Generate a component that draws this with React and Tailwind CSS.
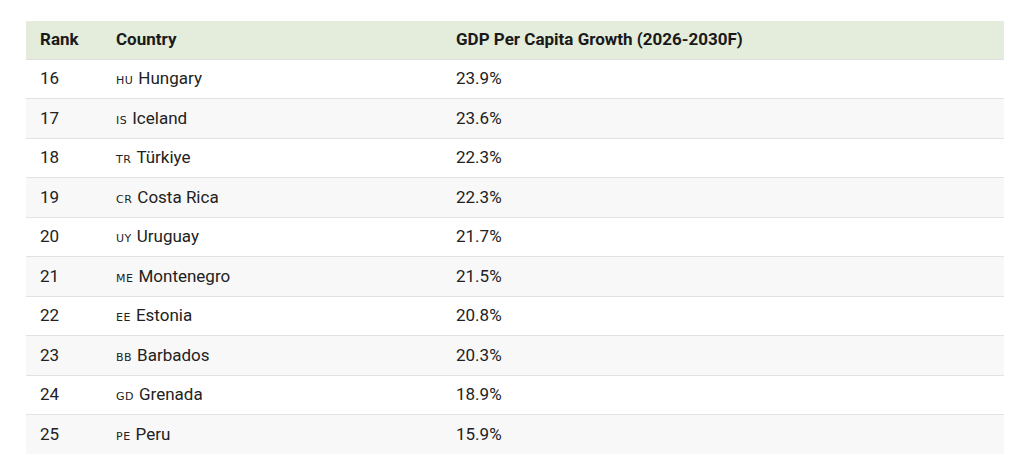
import React from 'react';

const rows = [
  { rank: 16, code: 'HU', country: 'Hungary', growth: '23.9%' },
  { rank: 17, code: 'IS', country: 'Iceland', growth: '23.6%' },
  { rank: 18, code: 'TR', country: 'Türkiye', growth: '22.3%' },
  { rank: 19, code: 'CR', country: 'Costa Rica', growth: '22.3%' },
  { rank: 20, code: 'UY', country: 'Uruguay', growth: '21.7%' },
  { rank: 21, code: 'ME', country: 'Montenegro', growth: '21.5%' },
  { rank: 22, code: 'EE', country: 'Estonia', growth: '20.8%' },
  { rank: 23, code: 'BB', country: 'Barbados', growth: '20.3%' },
  { rank: 24, code: 'GD', country: 'Grenada', growth: '18.9%' },
  { rank: 25, code: 'PE', country: 'Peru', growth: '15.9%' },
];

const App = () => {
  return (
    <div className="w-[1024px] h-[476px] bg-white pt-[21px] pl-[26px] font-['Roboto',sans-serif] text-[17px] text-[#222]">
      <table className="w-[978px] border-collapse">
        <thead>
          <tr className="bg-[#e4eddb] h-[38px] border-b border-[#dedede] text-left">
            <th className="w-[76px] pl-[14px] font-bold text-[#1a1a1a]">Rank</th>
            <th className="w-[340px] pl-[14px] font-bold text-[#1a1a1a]">Country</th>
            <th className="pl-[14px] font-bold text-[#1a1a1a]">GDP Per Capita Growth (2026-2030F)</th>
          </tr>
        </thead>
        <tbody>
          {rows.map((r, i) => (
            <tr
              key={r.rank}
              className={`h-[39.5px] ${i % 2 === 1 ? 'bg-[#f8f8f8]' : 'bg-white'} ${i < rows.length - 1 ? 'border-b border-[#e2e2e2]' : ''}`}
            >
              <td className="pl-[14px]">{r.rank}</td>
              <td className="pl-[14px]">
                <span className="text-[11px] font-['DejaVu_Sans',sans-serif] mr-[5px] tracking-[0.5px]">{r.code}</span>
                {r.country}
              </td>
              <td className="pl-[14px]">{r.growth}</td>
            </tr>
          ))}
        </tbody>
      </table>
    </div>
  );
};

export default App;
